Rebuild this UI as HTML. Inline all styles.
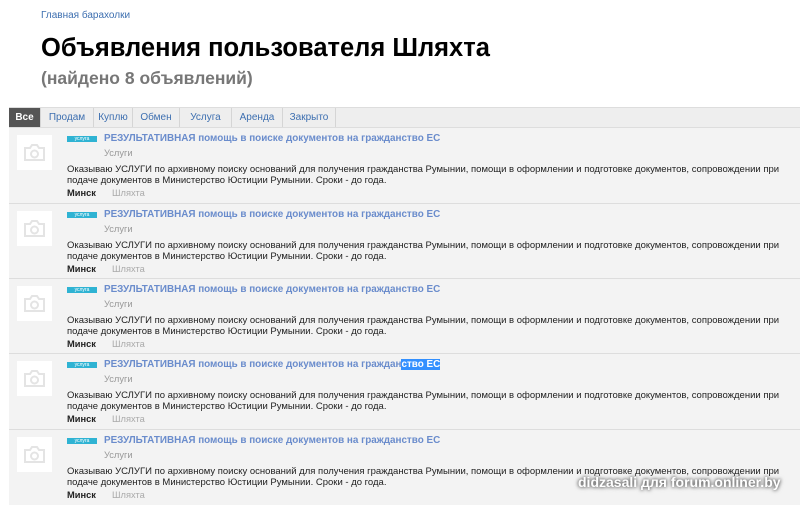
<!DOCTYPE html><html><head><meta charset="utf-8"><style>
body{margin:0;background:#fff;font-family:"Liberation Sans",Arial,sans-serif;width:800px;height:504px;overflow:hidden;position:relative}
.bc{position:absolute;left:41px;top:10px;font-size:10px;color:#3d6fb0}
h1{position:absolute;left:41px;top:34px;margin:0;font-size:25.5px;font-weight:bold;color:#000}
.sub{position:absolute;left:41px;top:68px;font-size:17.5px;font-weight:bold;color:#777}
.tabs{position:absolute;left:9px;top:107px;width:791px;height:20px;background:#eee;border-top:1px solid #ddd;box-sizing:border-box}
.tabs span{float:left;box-sizing:border-box;height:19px;line-height:19px;text-align:center;font-size:10px;color:#3d6fb0;border-right:1px solid #d5d5d5}
.tabs span.a{background:#555;color:#fff;font-weight:bold}
.row{position:absolute;left:9px;width:791px;height:75px;background:#f3f3f3;border-top:1px solid #ddd}
.img{position:absolute;left:8px;top:7px;width:35px;height:35px;background:#fff}
.img svg{position:absolute;left:6px;top:8px}
.badge{position:absolute;left:58px;top:8px;width:30px;height:6px;background:#2fb3d3;color:#fff;font-size:5px;line-height:6px;text-align:center}
.t{position:absolute;left:95px;top:5px;font-size:9.9px;font-weight:bold;color:#6a8ccc;white-space:nowrap}
.t .s{background:#3390ff;color:#fff}
.c{position:absolute;left:95px;top:20px;font-size:9.3px;color:#999}
.d{position:absolute;left:58px;top:37px;width:720px;font-size:9.5px;line-height:10.5px;color:#222}
.m{position:absolute;left:58px;top:60px;font-size:9.3px;font-weight:bold;color:#222}
.u{position:absolute;left:103px;top:60px;font-size:9.3px;color:#aaa}
.wm{position:absolute;left:578px;top:474px;font-size:14px;font-weight:bold;color:#fff;white-space:nowrap;text-shadow:0 0 3px #555,0 0 5px #777}
</style></head><body>
<div class="bc">Главная барахолки</div>
<h1>Объявления пользователя Шляхта</h1>
<div class="sub">(найдено 8 объявлений)</div>
<div class="tabs"><span class="a" style="width:32px">Все</span><span style="width:53px">Продам</span><span style="width:39px">Куплю</span><span style="width:47px">Обмен</span><span style="width:52px">Услуга</span><span style="width:51px">Аренда</span><span style="width:53px">Закрыто</span></div>

<div class="row" style="top:127px"><div class="img"><svg width="23" height="19" viewBox="0 0 23 19"><path d="M2 5h5l2-3h5l2 3h5v12H2z" fill="none" stroke="#e4e4e4" stroke-width="2"/><circle cx="11.5" cy="11" r="3.5" fill="none" stroke="#e4e4e4" stroke-width="2"/></svg></div><div class="badge">услуга</div><div class="t">РЕЗУЛЬТАТИВНАЯ помощь в поиске документов на гражданство ЕС</div><div class="c">Услуги</div><div class="d">Оказываю УСЛУГИ по архивному поиску оснований для получения гражданства Румынии, помощи в оформлении и подготовке документов, сопровождении при подаче документов в Министерство Юстиции Румынии. Сроки - до года.</div><div class="m">Минск</div><div class="u">Шляхта</div></div>

<div class="row" style="top:203px"><div class="img"><svg width="23" height="19" viewBox="0 0 23 19"><path d="M2 5h5l2-3h5l2 3h5v12H2z" fill="none" stroke="#e4e4e4" stroke-width="2"/><circle cx="11.5" cy="11" r="3.5" fill="none" stroke="#e4e4e4" stroke-width="2"/></svg></div><div class="badge">услуга</div><div class="t">РЕЗУЛЬТАТИВНАЯ помощь в поиске документов на гражданство ЕС</div><div class="c">Услуги</div><div class="d">Оказываю УСЛУГИ по архивному поиску оснований для получения гражданства Румынии, помощи в оформлении и подготовке документов, сопровождении при подаче документов в Министерство Юстиции Румынии. Сроки - до года.</div><div class="m">Минск</div><div class="u">Шляхта</div></div>

<div class="row" style="top:278px"><div class="img"><svg width="23" height="19" viewBox="0 0 23 19"><path d="M2 5h5l2-3h5l2 3h5v12H2z" fill="none" stroke="#e4e4e4" stroke-width="2"/><circle cx="11.5" cy="11" r="3.5" fill="none" stroke="#e4e4e4" stroke-width="2"/></svg></div><div class="badge">услуга</div><div class="t">РЕЗУЛЬТАТИВНАЯ помощь в поиске документов на гражданство ЕС</div><div class="c">Услуги</div><div class="d">Оказываю УСЛУГИ по архивному поиску оснований для получения гражданства Румынии, помощи в оформлении и подготовке документов, сопровождении при подаче документов в Министерство Юстиции Румынии. Сроки - до года.</div><div class="m">Минск</div><div class="u">Шляхта</div></div>

<div class="row" style="top:353px"><div class="img"><svg width="23" height="19" viewBox="0 0 23 19"><path d="M2 5h5l2-3h5l2 3h5v12H2z" fill="none" stroke="#e4e4e4" stroke-width="2"/><circle cx="11.5" cy="11" r="3.5" fill="none" stroke="#e4e4e4" stroke-width="2"/></svg></div><div class="badge">услуга</div><div class="t">РЕЗУЛЬТАТИВНАЯ помощь в поиске документов на граждан<span class="s">ство ЕС</span></div><div class="c">Услуги</div><div class="d">Оказываю УСЛУГИ по архивному поиску оснований для получения гражданства Румынии, помощи в оформлении и подготовке документов, сопровождении при подаче документов в Министерство Юстиции Румынии. Сроки - до года.</div><div class="m">Минск</div><div class="u">Шляхта</div></div>

<div class="row" style="top:429px"><div class="img"><svg width="23" height="19" viewBox="0 0 23 19"><path d="M2 5h5l2-3h5l2 3h5v12H2z" fill="none" stroke="#e4e4e4" stroke-width="2"/><circle cx="11.5" cy="11" r="3.5" fill="none" stroke="#e4e4e4" stroke-width="2"/></svg></div><div class="badge">услуга</div><div class="t">РЕЗУЛЬТАТИВНАЯ помощь в поиске документов на гражданство ЕС</div><div class="c">Услуги</div><div class="d">Оказываю УСЛУГИ по архивному поиску оснований для получения гражданства Румынии, помощи в оформлении и подготовке документов, сопровождении при подаче документов в Министерство Юстиции Румынии. Сроки - до года.</div><div class="m">Минск</div><div class="u">Шляхта</div></div>

<div class="wm">didzasali для forum.onliner.by</div>
</body></html>
